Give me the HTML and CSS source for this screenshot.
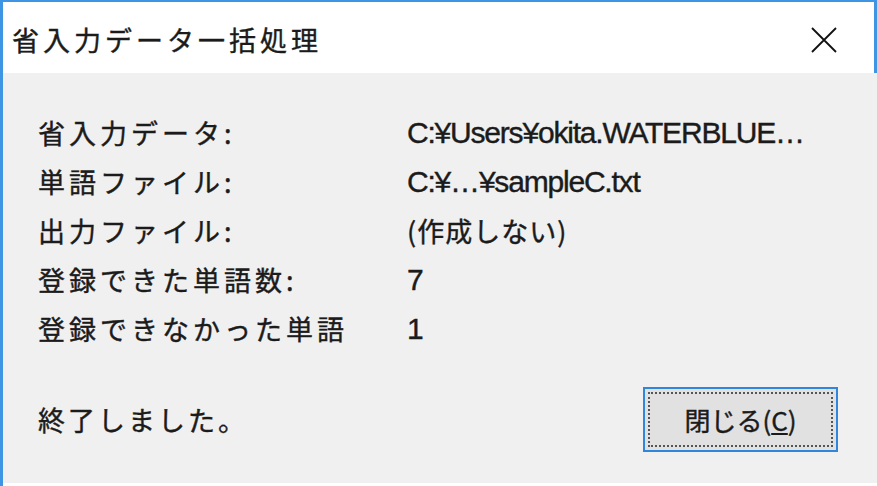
FILE: index.html
```html
<!DOCTYPE html>
<html lang="ja">
<head>
    <meta charset="UTF-8">
    <title>省入力データ一括処理</title>
    <link rel="stylesheet" href="styles.css">
</head>
<body>
    <div class="window">
        <div class="titlebar">
            <span class="title">省入力データ一括処理</span>
            <span class="close">
                <svg width="28" height="28" viewBox="0 0 28 28">
                    <path d="M2 2 L26 26 M26 2 L2 26" stroke="#111" stroke-width="1.8" fill="none"/>
                </svg>
            </span>
        </div>
        <div class="content">
            <div class="info">
                <span class="label">省入力データ:</span>
                <span class="value">C:¥Users¥okita.WATERBLUE…</span>
                <span class="label">単語ファイル:</span>
                <span class="value">C:¥…¥sampleC.txt</span>
                <span class="label">出力ファイル:</span>
                <span class="value jp">(作成しない)</span>
                <span class="label">登録できた単語数:</span>
                <span class="value">7</span>
                <span class="label">登録できなかった単語</span>
                <span class="value">1</span>
            </div>
            <div class="footer">
                <span class="status">終了しました。</span>
                <button class="btn"><span class="focus">閉じる(<u>C</u>)</span></button>
            </div>
        </div>
    </div>
</body>
</html>
```

FILE: styles.css
```css
html, body {
    margin: 0;
    padding: 0;
    width: 100%;
    height: 100%;
    overflow: hidden;
    background: #fff;
}

.window {
    box-sizing: border-box;
    width: 877px;
    height: 486px;
    border-left: 3px solid #3d95e3;
    border-top: 2px solid #3d95e3;
    display: flex;
    flex-direction: column;
    font-family: "Noto Sans CJK JP", "Liberation Sans", sans-serif;
    color: #1b1b1b;
    -webkit-text-stroke: 0.4px #1b1b1b;
}

.titlebar {
    height: 71px;
    background: #fff;
    border-right: 3px solid #3d95e3;
    display: flex;
    align-items: center;
    justify-content: space-between;
    padding: 0 36px 0 9px;
}

.title {
    font-size: 27px;
    letter-spacing: 4px;
    margin-top: 4px;
}

.close {
    display: flex;
    margin-top: 5px;
}

.content {
    flex: 1;
    background: #f0f0f0;
    padding: 35px 39px 0 35px;
    margin-bottom: 3px;
}

.info {
    display: grid;
    grid-template-columns: 369px 1fr;
    grid-auto-rows: 49px;
    align-items: center;
}

.label {
    font-size: 27px;
    letter-spacing: 4px;
}

.value {
    font-family: "Liberation Sans", "Noto Sans CJK JP", sans-serif;
    font-size: 30px;
    letter-spacing: -1.2px;
}

.value.jp {
    font-family: "Noto Sans CJK JP", sans-serif;
    font-size: 27px;
    letter-spacing: 1px;
}

.footer {
    margin-top: 34px;
    display: flex;
    justify-content: space-between;
    align-items: center;
}

.status {
    font-size: 27px;
    letter-spacing: 3px;
}

.btn {
    width: 195px;
    height: 65px;
    padding: 3px;
    background: #e1e1e1;
    border: 2px solid #2f86dc;
    font-family: "Noto Sans CJK JP", sans-serif;
    color: #1b1b1b;
    -webkit-text-stroke: 0.4px #1b1b1b;
    display: flex;
}

.btn .focus {
    flex: 1;
    border: 2px dotted #555;
    display: flex;
    align-items: center;
    justify-content: center;
    font-size: 26px;
    letter-spacing: 0;
}
```
